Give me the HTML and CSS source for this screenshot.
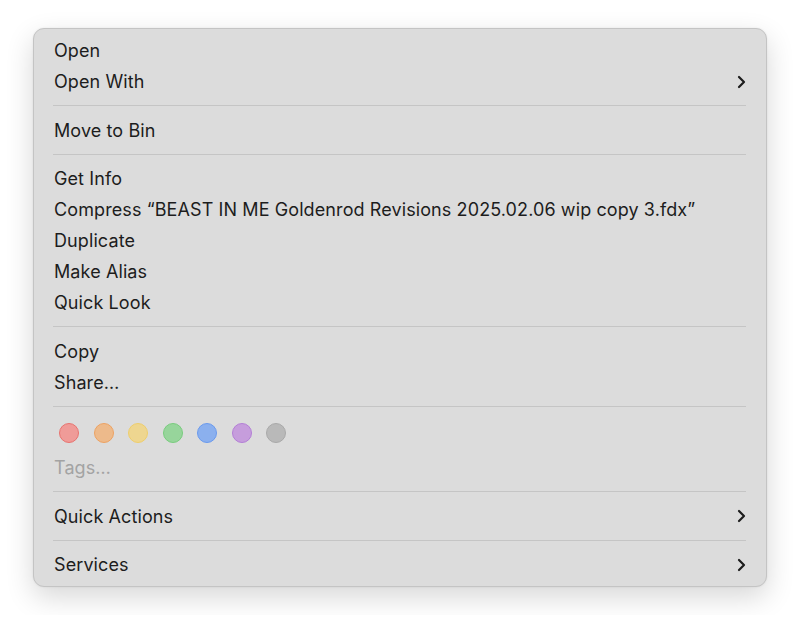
FILE: index.html
```html
<!DOCTYPE html>
<html lang="en">
<head>
    <meta charset="UTF-8">
    <title>Context Menu</title>
    <link rel="stylesheet" href="styles.css">
</head>
<body>

    <!-- Finder context menu -->
    <div class="menu">
        <div class="item">Open</div>
        <div class="item">Open With <span class="chev"><svg width="9" height="14" viewBox="0 0 9 14"><path d="M2 2 L7 7 L2 12" fill="none" stroke="#1d1d1d" stroke-width="2.2" stroke-linecap="round" stroke-linejoin="round"/></svg></span></div>
        <div class="sep"></div>
        <div class="item">Move to Bin</div>
        <div class="sep"></div>
        <div class="item">Get Info</div>
        <div class="item">Compress “BEAST IN ME Goldenrod Revisions 2025.02.06 wip copy 3.fdx”</div>
        <div class="item">Duplicate</div>
        <div class="item">Make Alias</div>
        <div class="item">Quick Look</div>
        <div class="sep"></div>
        <div class="item">Copy</div>
        <div class="item">Share…</div>
        <div class="sep"></div>
        <div class="tags">
            <span class="dot red"></span>
            <span class="dot orange"></span>
            <span class="dot yellow"></span>
            <span class="dot green"></span>
            <span class="dot blue"></span>
            <span class="dot purple"></span>
            <span class="dot gray"></span>
        </div>
        <div class="item muted">Tags…</div>
        <div class="sep"></div>
        <div class="item">Quick Actions <span class="chev"><svg width="9" height="14" viewBox="0 0 9 14"><path d="M2 2 L7 7 L2 12" fill="none" stroke="#1d1d1d" stroke-width="2.2" stroke-linecap="round" stroke-linejoin="round"/></svg></span></div>
        <div class="sep"></div>
        <div class="item">Services <span class="chev"><svg width="9" height="14" viewBox="0 0 9 14"><path d="M2 2 L7 7 L2 12" fill="none" stroke="#1d1d1d" stroke-width="2.2" stroke-linecap="round" stroke-linejoin="round"/></svg></span></div>
    </div>

</body>
</html>
```

FILE: styles.css
```css
body {
    margin: 0;
    padding: 28px 33px;
    background: #ffffff;
    font-family: Inter, "Noto Sans", sans-serif;
}
.menu {
    width: 732px;
    padding: 6px 0;
    background: #dcdcdc;
    border: 1px solid #c4c4c4;
    border-radius: 11px;
    box-shadow: 0 10px 28px rgba(0, 0, 0, 0.16), 0 0 2px rgba(0, 0, 0, 0.08);
}
.item {
    display: flex;
    align-items: center;
    justify-content: space-between;
    height: 31px;
    padding: 0 20px 0 20px;
    font-size: 18px;
    color: #1d1d1d;
    letter-spacing: 0.1px;
}
.muted {
    color: #a3a3a3;
}
.chev {
    display: flex;
}
.sep {
    height: 1px;
    margin: 8px 20px 8.5px 19px;
    background: #c5c5c5;
}
.tags {
    display: flex;
    align-items: flex-start;
    gap: 14.5px;
    height: 29px;
    padding: 8px 0 0 25px;
}
.dot {
    width: 18px;
    height: 18px;
    border-radius: 50%;
    border: 1px solid;
}
.red { background: #ef9b98; border-color: #e8736f; }
.orange { background: #edba8b; border-color: #eda262; }
.yellow { background: #eed690; border-color: #efce6b; }
.green { background: #97d59b; border-color: #79cc7e; }
.blue { background: #8bb0ee; border-color: #6a9aee; }
.purple { background: #c69ddc; border-color: #b37ed6; }
.gray { background: #b9b9b9; border-color: #a9a9a9; }
```
